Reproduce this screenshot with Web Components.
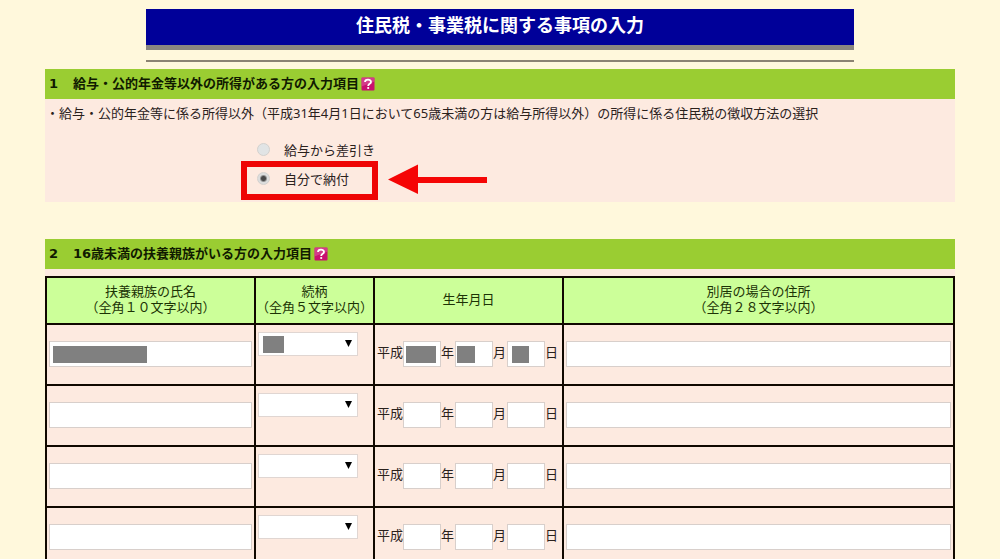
<!DOCTYPE html>
<html lang="ja">
<head>
  <meta charset="UTF-8">
  <meta name="viewport" content="width=device-width, initial-scale=1">
  <title>住民税・事業税に関する事項の入力</title>
  <style>
    html {
      scrollbar-width: none;
      background: #fff8dc;
    }

    body {
      margin: 0;
      padding: 9px 45px 0;
      color: #2a211c;
      font: 13px/20px "Noto Sans", "Noto Sans CJK JP", sans-serif;
    }
  </style>
</head>
<body>
  <page-title>住民税・事業税に関する事項の入力</page-title>

  <main>
    <form-section number="1" heading="給与・公的年金等以外の所得がある方の入力項目">
      <collection-method></collection-method>
    </form-section>

    <form-section number="2" heading="16歳未満の扶養親族がいる方の入力項目">
      <dependents-table></dependents-table>
    </form-section>
  </main>

  <script>
    class PageTitle extends HTMLElement {
      constructor() {
        super();
        this.attachShadow({ mode: 'open' });
      }

      connectedCallback() {
        this.shadowRoot.innerHTML = `
          <style>
            :host {
              display: block;
              padding: 0 101px;
              margin-bottom: 7px;
            }

            h1 {
              margin: 0;
              background: #000099;
              border-bottom: 5px solid #8a8680;
              color: #fff;
              font-size: 18px;
              line-height: 32px;
              padding-bottom: 4px;
              text-align: center;
            }

            hr {
              margin: 10px 0 0;
              border: 0;
              border-top: 2px solid #8b8372;
            }
          </style>

          <h1><slot></slot></h1>
          <hr>
        `;
      }
    }

    class HelpLink extends HTMLElement {
      constructor() {
        super();
        this.attachShadow({ mode: 'open' });
      }

      connectedCallback() {
        this.shadowRoot.innerHTML = `
          <style>
            :host { display: block; }

            a { display: block; }

            svg {
              display: block;
              width: 14px;
              height: 14px;
            }
          </style>

          <a href="#" aria-label="ヘルプ">
            <svg viewBox="0 0 14 14" aria-hidden="true">
              <rect x="0.5" y="0.5" width="13" height="13" rx="1" fill="#c9106f"/>
              <path d="M0.5 0.5h13v4l-13 5z" fill="#dc5a9c" opacity=".6"/>
              <path d="M4 5C4 1.8 10 1.8 10 4.9 10 7 7.2 6.7 7.2 9" fill="none" stroke="#fff" stroke-width="1.8"/>
              <circle cx="7.2" cy="11" r="1.1" fill="#fff"/>
            </svg>
          </a>
        `;
      }
    }

    class FormSection extends HTMLElement {
      constructor() {
        super();
        this.attachShadow({ mode: 'open' });
      }

      connectedCallback() {
        this.shadowRoot.innerHTML = `
          <style>
            :host {
              display: block;
              margin-bottom: 37px;
            }

            section { background: #fdeae0; }

            header {
              display: flex;
              align-items: center;
              padding: 0 4px;
              background: #9acd32;
              color: #101a00;
            }

            h2 {
              display: flex;
              margin: 0;
              font: bold 13px/30px "DejaVu Sans", "Noto Sans CJK JP", sans-serif;
            }

            .number { width: 24px; }

            help-link { margin-left: 2px; }
          </style>

          <section>
            <header>
              <h2><span class="number">${this.getAttribute('number')}</span><span>${this.getAttribute('heading')}</span></h2>
              <help-link></help-link>
            </header>
            <slot></slot>
          </section>
        `;
      }
    }

    class CollectionMethod extends HTMLElement {
      constructor() {
        super();
        this.attachShadow({ mode: 'open' });
      }

      connectedCallback() {
        this.shadowRoot.innerHTML = `
          <style>
            :host { display: block; }

            fieldset {
              min-width: 0;
              margin: 0;
              padding: 4px 0 9px 1px;
              border: 0;
            }

            legend {
              float: left;
              width: 100%;
              padding: 0;
              margin-bottom: 12px;
            }

            .options {
              clear: both;
              display: grid;
              justify-items: start;
              padding-left: 211px;
            }

            .option {
              position: relative;
              display: flex;
              align-items: center;
              height: 29px;
            }

            label {
              display: flex;
              align-items: center;
              gap: 14px;
              line-height: 18px;
            }

            input {
              appearance: none;
              width: 13px;
              height: 13px;
              margin: 0;
              border: 1px solid #d3d1ce;
              border-radius: 50%;
              background: #e1e4e5;
            }

            input:checked {
              background: radial-gradient(circle, #484848 0 2px, #dcdddd 4px);
            }

            /* red marker around the chosen answer */
            .marker {
              position: absolute;
              top: -3px;
              left: -16px;
              box-sizing: border-box;
              width: 137px;
              height: 39px;
              border: 6px solid #ee0505;
              pointer-events: none;
            }

            .arrow {
              position: absolute;
              top: 0;
              left: 131px;
              width: 100px;
              height: 30px;
            }
          </style>

          <fieldset>
            <legend>・給与・公的年金等に係る所得以外（平成31年4月1日において65歳未満の方は給与所得以外）の所得に係る住民税の徴収方法の選択</legend>
            <div class="options">
              <div class="option">
                <label><input type="radio" name="method" value="salary">給与から差引き</label>
              </div>
              <div class="option">
                <label><input type="radio" name="method" value="self" checked>自分で納付</label>
                <span class="marker"></span>
                <svg class="arrow" viewBox="0 0 100 30" aria-hidden="true">
                  <path d="M0 15.5L30 0.5v12.5h69v6H30v11z" fill="#f50505"/>
                </svg>
              </div>
            </div>
          </fieldset>
        `;
      }
    }

    // White input, "mask" is "left width" of the grey block hiding the value
    class TextField extends HTMLElement {
      constructor() {
        super();
        this.attachShadow({ mode: 'open' });
      }

      connectedCallback() {
        const mask = this.getAttribute('mask');
        const [left, width] = mask ? mask.split(' ') : [];

        this.shadowRoot.innerHTML = `
          <style>
            :host {
              display: block;
              position: relative;
            }

            input {
              display: block;
              box-sizing: border-box;
              width: 100%;
              height: 26px;
              padding: 2px 4px;
              border: 1px solid #d8cfcb;
              background: #fff;
              font: inherit;
            }

            .mask {
              position: absolute;
              top: 5px;
              height: 17px;
              background: #808080;
            }
          </style>

          <input type="text" aria-label="${this.getAttribute('label')}">
          ${mask ? `<span class="mask" style="left: ${left}px; width: ${width}px"></span>` : ''}
        `;
      }
    }

    class RelationSelect extends HTMLElement {
      constructor() {
        super();
        this.attachShadow({ mode: 'open' });
      }

      connectedCallback() {
        this.shadowRoot.innerHTML = `
          <style>
            :host {
              display: block;
              position: relative;
              width: 100px;
            }

            select {
              appearance: none;
              display: block;
              box-sizing: border-box;
              width: 100%;
              height: 24px;
              padding: 0 16px 0 4px;
              border: 1px solid #e0d6d2;
              border-radius: 0;
              background: #fff;
              font: inherit;
            }

            svg {
              position: absolute;
              top: 8px;
              right: 6px;
              width: 7px;
              height: 7px;
              pointer-events: none;
            }

            .mask {
              position: absolute;
              top: 4px;
              left: 5px;
              width: 21px;
              height: 17px;
              background: #808080;
            }
          </style>

          <select aria-label="続柄">
            <option value=""></option>
          </select>
          <svg viewBox="0 0 7 7" aria-hidden="true"><path d="M0 0h7L3.5 7z" fill="#000"/></svg>
          ${this.hasAttribute('masked') ? '<span class="mask"></span>' : ''}
        `;
      }
    }

    class BirthDate extends HTMLElement {
      constructor() {
        super();
        this.attachShadow({ mode: 'open' });
      }

      connectedCallback() {
        const masked = this.hasAttribute('masked');
        const parts = [
          { label: '年', mask: '3 30' },
          { label: '月', mask: '2 18' },
          { label: '日', mask: '5 17' }
        ];

        this.shadowRoot.innerHTML = `
          <style>
            :host {
              display: flex;
              align-items: center;
              white-space: nowrap;
            }

            .part {
              display: flex;
              align-items: center;
              margin-right: 1px;
            }

            text-field { width: 38px; }

            .unit { padding-bottom: 4px; }
          </style>

          <span class="unit">平成</span>
          ${parts.map((part) => `
            <span class="part">
              <text-field label="${part.label}" ${masked ? `mask="${part.mask}"` : ''}></text-field>
              <span class="unit">${part.label}</span>
            </span>
          `).join('')}
        `;
      }
    }

    class DependentsTable extends HTMLElement {
      constructor() {
        super();
        this.attachShadow({ mode: 'open' });
      }

      renderRow(filled) {
        return `
          <tr>
            <td><text-field label="扶養親族の氏名" ${filled ? 'mask="4 94"' : ''}></text-field></td>
            <td class="relation"><relation-select ${filled ? 'masked' : ''}></relation-select></td>
            <td><birth-date ${filled ? 'masked' : ''}></birth-date></td>
            <td><text-field label="別居の場合の住所"></text-field></td>
          </tr>
        `;
      }

      connectedCallback() {
        const rows = [true, false, false, false];

        this.shadowRoot.innerHTML = `
          <style>
            :host {
              display: block;
              padding-top: 7px;
            }

            table {
              width: 100%;
              border-collapse: collapse;
              table-layout: fixed;
            }

            th, td {
              box-sizing: border-box;
              border: 2px solid #100800;
            }

            th {
              height: 47px;
              padding: 0 0 4px;
              background: #ccff99;
              color: #1c3305;
              font-weight: normal;
              line-height: 16px;
              white-space: nowrap;
            }

            td {
              height: 61px;
              padding: 0 2px 2px;
            }

            .relation {
              padding-top: 7px;
              vertical-align: top;
            }

            .name-col { width: 209px; }
            .relation-col { width: 119px; }
            .birth-col { width: 189px; }
          </style>

          <table>
            <colgroup>
              <col class="name-col">
              <col class="relation-col">
              <col class="birth-col">
              <col>
            </colgroup>
            <thead>
              <tr>
                <th scope="col">扶養親族の氏名<br>（全角１０文字以内）</th>
                <th scope="col">続柄<br>（全角５文字以内）</th>
                <th scope="col">生年月日</th>
                <th scope="col">別居の場合の住所<br>（全角２８文字以内）</th>
              </tr>
            </thead>
            <tbody>
              ${rows.map((filled) => this.renderRow(filled)).join('')}
            </tbody>
          </table>
        `;
      }
    }

    customElements.define('page-title', PageTitle);
    customElements.define('help-link', HelpLink);
    customElements.define('form-section', FormSection);
    customElements.define('collection-method', CollectionMethod);
    customElements.define('text-field', TextField);
    customElements.define('relation-select', RelationSelect);
    customElements.define('birth-date', BirthDate);
    customElements.define('dependents-table', DependentsTable);
  </script>
</body>
</html>
